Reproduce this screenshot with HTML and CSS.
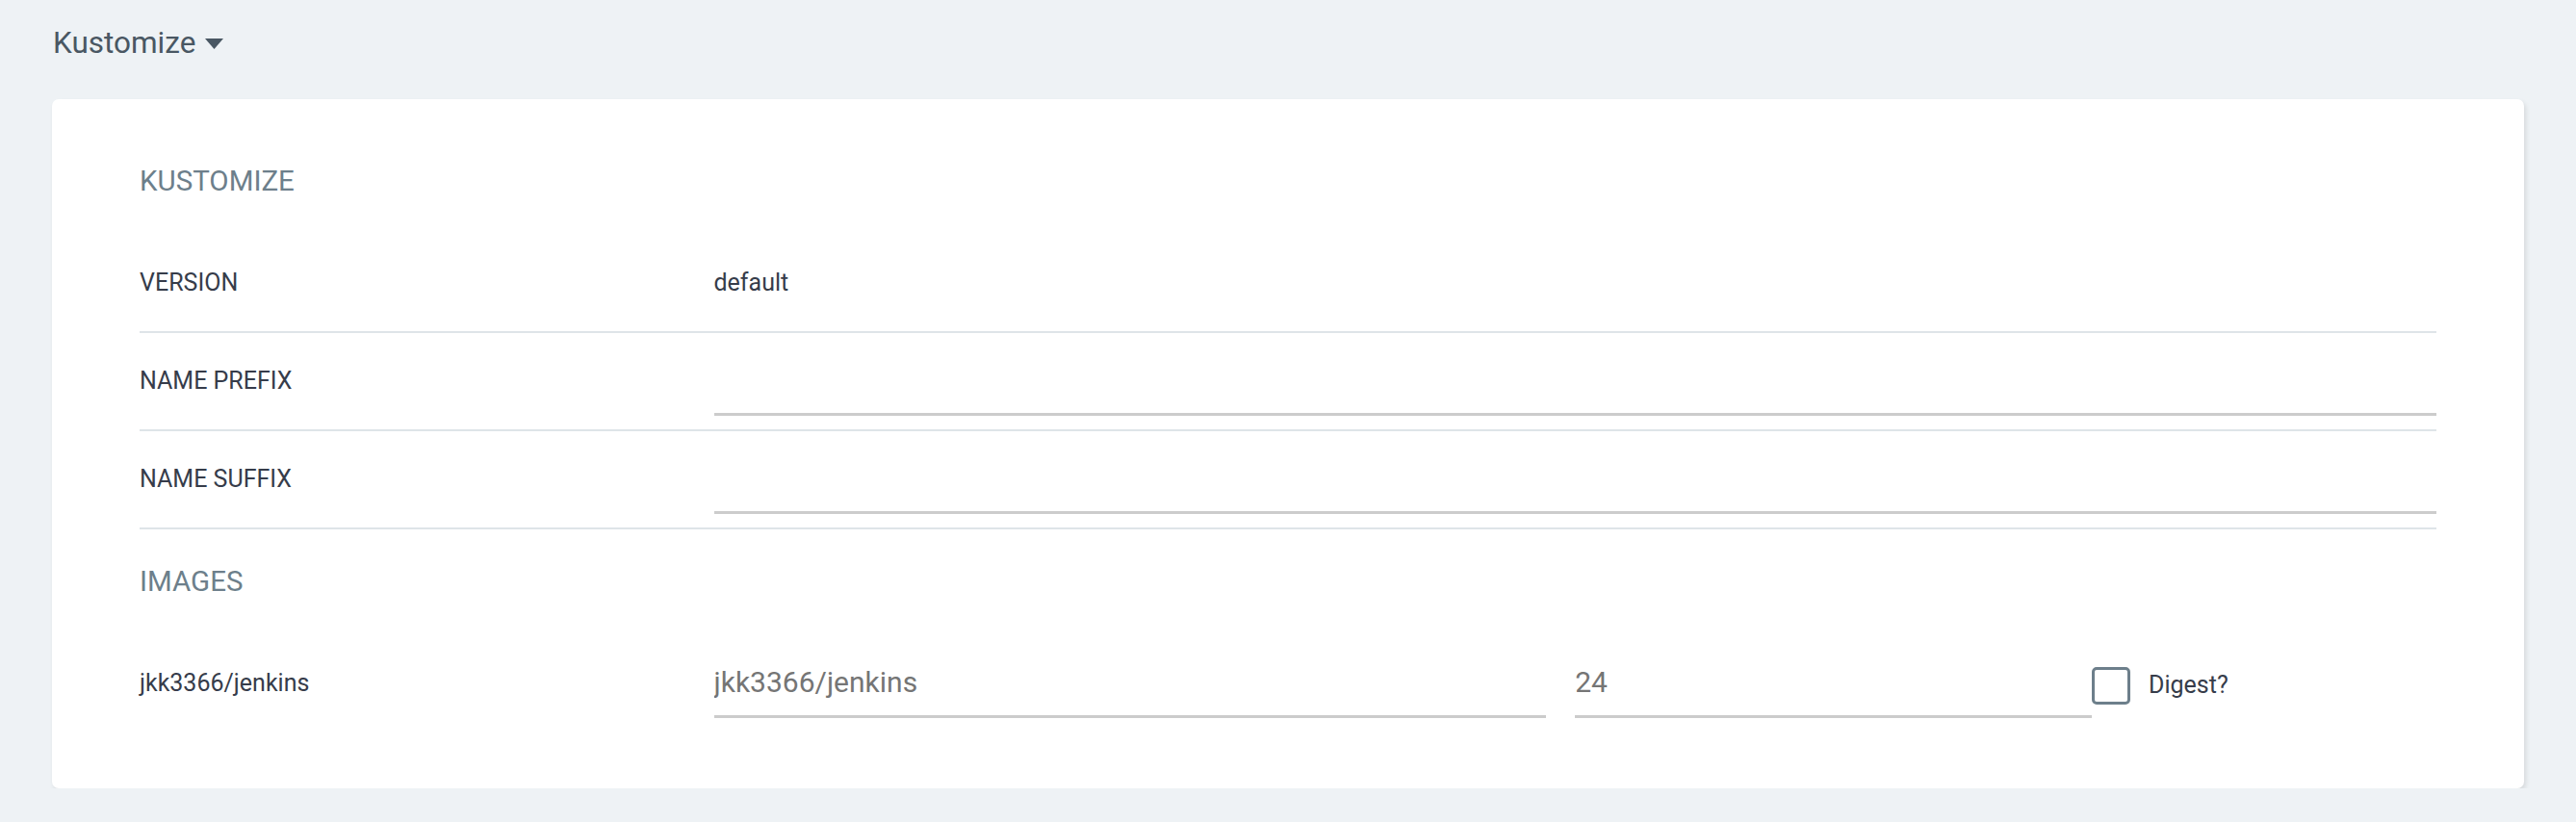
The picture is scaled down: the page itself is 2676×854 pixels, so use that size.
FILE: index.html
```html
<!DOCTYPE html>
<html lang="en">
<head>
<meta charset="utf-8">
<title>Kustomize</title>
<link rel="stylesheet" href="styles.css">
</head>
<body>
<div class="page">
  <div class="heading">
    <span class="heading-text">Kustomize</span>
    <svg class="caret" width="19" height="11" viewBox="0 0 19 11"><path d="M0 0 L19 0 L9.5 11 Z" fill="#495763"/></svg>
  </div>
  <div class="card">
    <div class="section-title">KUSTOMIZE</div>
    <div class="row">
      <div class="label">VERSION</div>
      <div class="value">default</div>
    </div>
    <div class="row">
      <div class="label">NAME PREFIX</div>
      <div class="value"><input class="field" type="text"></div>
    </div>
    <div class="row">
      <div class="label">NAME SUFFIX</div>
      <div class="value"><input class="field" type="text"></div>
    </div>
    <div class="section-title images-title">IMAGES</div>
    <div class="row row-last">
      <div class="label">jkk3366/jenkins</div>
      <div class="value image-grid">
        <div class="cell cell-name"><input class="field" type="text" placeholder="jkk3366/jenkins"></div>
        <div class="cell"><input class="field" type="text" placeholder="24"></div>
        <label class="cell check">
          <span class="box"></span>
          <span class="check-label">Digest?</span>
        </label>
      </div>
    </div>
  </div>
</div>
</body>
</html>
```

FILE: styles.css
```css
html, body {
  margin: 0;
  padding: 0;
}
body {
  background: #eef2f5;
  font-family: Roboto, "Liberation Sans", sans-serif;
  color: #363c4a;
}
.page {
  padding: 25px 54px 0 54px;
}
.heading {
  display: flex;
  align-items: center;
  height: 40px;
  gap: 10px;
  color: #495763;
}
.heading-text {
  font-size: 31.5px;
  line-height: 40px;
  padding-left: 1px;
}
.caret {
  display: block;
  margin-top: 1px;
}
.card {
  margin-top: 38px;
  background: #ffffff;
  border-radius: 7px;
  box-shadow: 2px 3px 5px rgba(0, 0, 0, 0.1);
  padding: 67px 91px 59px 91px;
}
.section-title {
  font-size: 29.5px;
  line-height: 36px;
  color: #6d7f8b;
  margin-bottom: 38px;
}
.images-title {
  margin-top: 36px;
}
.row {
  display: grid;
  grid-template-columns: 25% 75%;
  align-items: center;
  min-height: 72px;
  padding: 14px 0;
  border-bottom: 2px solid #dee4e8;
}
.row-last {
  border-bottom: none;
}
.label {
  font-size: 25px;
  line-height: 30px;
  color: #363c4a;
}
.value {
  font-size: 25px;
  line-height: 30px;
  color: #363c4a;
}
.field {
  display: block;
  width: 100%;
  height: 72px;
  box-sizing: border-box;
  margin: 0;
  padding: 0;
  border: none;
  border-bottom: 3.5px solid #cccccc;
  outline: none;
  background: transparent;
  font-family: Roboto, "Liberation Sans", sans-serif;
  font-size: 30px;
  color: #757575;
}
.field::placeholder {
  color: #757575;
  opacity: 1;
}
.image-grid {
  display: grid;
  grid-template-columns: 50% 30% 20%;
  align-items: center;
}
.cell-name {
  padding-right: 30px;
}
.check {
  display: flex;
  align-items: center;
  gap: 19px;
  padding-top: 4px;
}
.box {
  display: block;
  width: 40px;
  height: 39px;
  box-sizing: border-box;
  border: 3.5px solid #6d7f8b;
  border-radius: 5px;
}
.check-label {
  font-size: 25px;
  line-height: 30px;
  color: #363c4a;
}
```
